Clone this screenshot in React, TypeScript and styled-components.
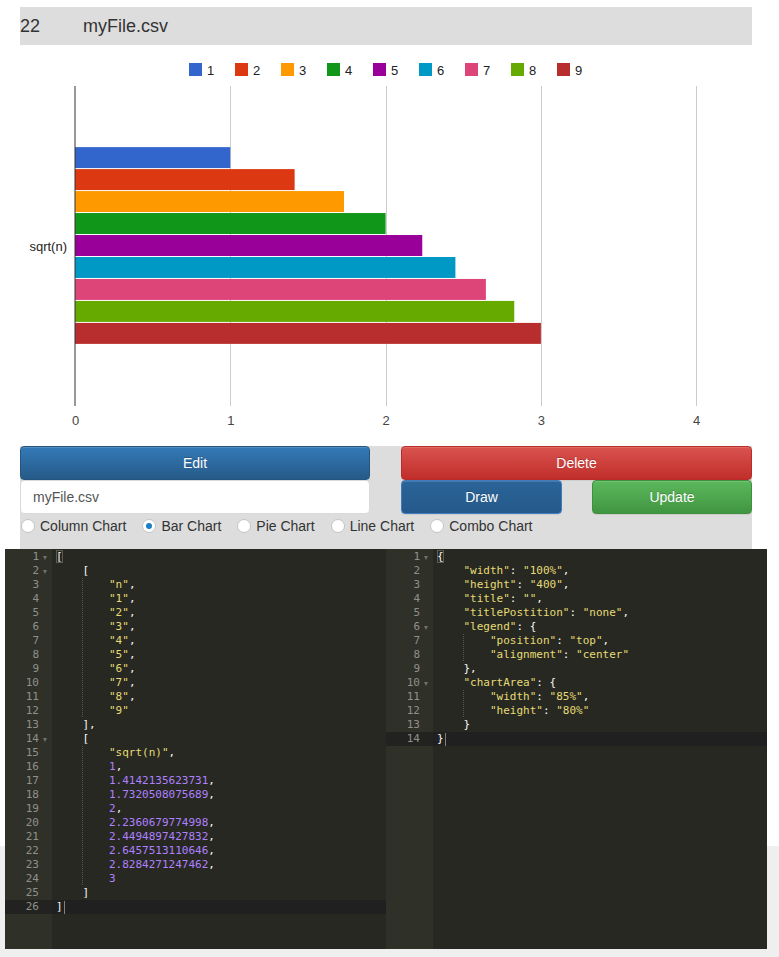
import React from "react";
import styled, { createGlobalStyle, css } from "styled-components";

const GlobalStyle = createGlobalStyle`
  html, body { margin: 0; padding: 0; }
  body { font-family: "Liberation Sans", Arial, Helvetica, sans-serif; color: #333; }
`;

const Page = styled.div`
  min-height: 957px;
  padding-top: 7px;
  box-sizing: border-box;
  background: linear-gradient(to bottom, #ffffff 0, #ffffff 846px, #efefef 846px);
`;

const Container = styled.div`
  width: 732px;
  margin-left: 20px;
`;

const TitleBar = styled.div`
  height: 38px;
  background: #dddddd;
  display: flex;
  align-items: center;
  font-size: 18px;
  color: #333;
`;

const TitleId = styled.span`
  width: 63px;
`;

const TitleName = styled.span``;

const ChartSvg = styled.svg`
  display: block;
  margin-top: 1px;
  font-family: "Liberation Sans", Arial, sans-serif;
`;

const Panel = styled.div`
  background: #dddddd;
`;

const Row = styled.div`
  display: flex;
  justify-content: space-between;
  align-items: stretch;
  height: 34px;
`;

type Variant = "primary" | "danger" | "success" | "focused";

const variants: Record<Variant, ReturnType<typeof css>> = {
  primary: css`
    background: linear-gradient(to bottom, #337ab7 0, #265a88 100%);
    border-color: #245580;
  `,
  danger: css`
    background: linear-gradient(to bottom, #d9534f 0, #c12e2a 100%);
    border-color: #b92c28;
  `,
  success: css`
    background: linear-gradient(to bottom, #5cb85c 0, #419641 100%);
    border-color: #3e8f3e;
  `,
  focused: css`
    background: linear-gradient(to bottom, #2b6499 0, #245a8a 100%);
    border-color: #3f7bbd;
  `,
};

const Button = styled.button<{ $variant: Variant; $width: number }>`
  width: ${(p) => p.$width}px;
  height: 34px;
  box-sizing: border-box;
  border: 1px solid transparent;
  border-radius: 4px;
  color: #fff;
  font-family: "Liberation Sans", Arial, sans-serif;
  font-size: 14px;
  text-shadow: 0 -1px 0 rgba(0, 0, 0, 0.2);
  box-shadow: inset 0 1px 0 rgba(255, 255, 255, 0.15), 0 1px 1px rgba(0, 0, 0, 0.075);
  padding: 0;
  cursor: pointer;
  ${(p) => variants[p.$variant]}
`;

const FileInput = styled.input`
  width: 350px;
  height: 34px;
  box-sizing: border-box;
  border: 1px solid #d9d9d9;
  border-radius: 4px;
  background: #fff;
  padding: 6px 12px;
  font-family: "Liberation Sans", Arial, sans-serif;
  font-size: 14px;
  color: #555;
  outline: none;
`;

const RightGroup = styled.div`
  width: 351px;
  display: flex;
  justify-content: space-between;
`;

const RadioRow = styled.div`
  display: flex;
  align-items: center;
  height: 35px;
  padding-bottom: 12px;
  box-sizing: border-box;
`;

const RadioItem = styled.label`
  display: flex;
  align-items: center;
  gap: 5px;
  margin-right: 15px;
  font-size: 14px;
  line-height: 20px;
  color: #333;
`;

const RadioCircle = styled.span<{ $checked?: boolean }>`
  width: 14px;
  height: 14px;
  margin-left: 1px;
  box-sizing: border-box;
  border-radius: 50%;
  border: 1px solid #c4c4c4;
  background: #fff;
  display: flex;
  align-items: center;
  justify-content: center;
  ${(p) =>
    p.$checked &&
    css`
      &::after {
        content: "";
        width: 6px;
        height: 6px;
        border-radius: 50%;
        background: #1b7fc4;
      }
    `}
`;

const EditorRow = styled.div`
  display: grid;
  grid-template-columns: 1fr 1fr;
  margin: 0 -15px;
  height: 400px;
`;

const Editor = styled.div`
  display: flex;
  height: 400px;
  overflow: hidden;
  font-family: "DejaVu Sans Mono", "Liberation Mono", monospace;
  font-size: 11px;
  line-height: 14px;
`;

const Gutter = styled.div`
  width: 47px;
  flex-shrink: 0;
  background: #2f3129;
  color: #8f908a;
  padding-top: 1px;
`;

const GutterCell = styled.div<{ $active?: boolean }>`
  height: 14px;
  display: flex;
  justify-content: flex-end;
  align-items: center;
  background: ${(p) => (p.$active ? "#222320" : "transparent")};
`;

const FoldSlot = styled.span`
  width: 13px;
  height: 14px;
  display: flex;
  align-items: center;
  padding-left: 4px;
  box-sizing: border-box;
`;

const FoldArrow = styled.span`
  width: 0;
  height: 0;
  border-left: 2.5px solid transparent;
  border-right: 2.5px solid transparent;
  border-top: 4px solid #6f706a;
  margin-top: 1px;
`;

const CodeArea = styled.div`
  flex: 1;
  background: #272822;
  padding-top: 1px;
`;

const CodeLine = styled.div<{ $active?: boolean }>`
  height: 14px;
  padding-left: 4px;
  white-space: pre;
  color: #f8f8f2;
  background: ${(p) => (p.$active ? "#202020" : "transparent")};
`;

const Indent = styled.span<{ $guide?: boolean }>`
  display: inline-block;
  height: 14px;
  vertical-align: top;
  ${(p) =>
    p.$guide &&
    css`
      background: repeating-linear-gradient(to bottom, #57574e 0, #57574e 1px, transparent 1px, transparent 2px)
        right top / 1px 100% no-repeat;
    `}
`;

const Str = styled.span`
  color: #e6db74;
`;

const Num = styled.span`
  color: #ae81ff;
`;

const Bracket = styled.span`
  box-shadow: inset 0 0 0 1px #5c5c52;
`;

const Cursor = styled.span`
  display: inline-block;
  width: 1px;
  height: 13px;
  margin-left: 1px;
  vertical-align: top;
  margin-top: 1px;
  background: rgba(248, 248, 240, 0.45);
`;

/* ---------- chart ---------- */

const values = [1, 2, 3, 4, 5, 6, 7, 8, 9].map((n) => Math.sqrt(n));
const colors = ["#3366cc", "#dc3912", "#ff9900", "#109618", "#990099", "#0099c6", "#dd4477", "#66aa00", "#b82e2e"];

const CH_LEFT = 55;
const CH_TOP = 40;
const CH_H = 320;
const UNIT = 155.3;

function BarChart() {
  const groupH = CH_H * 0.618;
  const groupTop = CH_TOP + (CH_H - groupH) / 2;
  const band = groupH / values.length;
  return (
    <ChartSvg width={732} height={400} viewBox="0 0 732 400">
      {values.map((_, i) => (
        <g key={`l${i}`}>
          <rect x={169 + i * 46} y={17} width={13} height={13} fill={colors[i]} />
          <text x={187 + i * 46} y={28.5} fontSize={13} fill="#222">
            {i + 1}
          </text>
        </g>
      ))}
      {[1, 2, 3, 4].map((v) => (
        <rect key={`g${v}`} x={Math.round(CH_LEFT + v * UNIT)} y={CH_TOP} width={1} height={CH_H} fill="#cccccc" />
      ))}
      {values.map((v, i) => (
        <rect
          key={`b${i}`}
          x={CH_LEFT}
          y={groupTop + i * band}
          width={v * UNIT}
          height={band - 1}
          fill={colors[i]}
        />
      ))}
      <rect x={CH_LEFT - 0.5} y={CH_TOP} width={1} height={CH_H} fill="#333333" />
      {[0, 1, 2, 3, 4].map((v) => (
        <text key={`t${v}`} x={CH_LEFT + v * UNIT + 0.5} y={378.5} fontSize={13} fill="#444" textAnchor="middle">
          {v}
        </text>
      ))}
      <text x={47} y={205} fontSize={13} fill="#222" textAnchor="end">
        sqrt(n)
      </text>
    </ChartSvg>
  );
}

/* ---------- code editor ---------- */

type Line = { text: string; fold?: boolean };

const dataLines: Line[] = [
  { text: "[", fold: true },
  { text: "    [", fold: true },
  { text: '        "n",' },
  { text: '        "1",' },
  { text: '        "2",' },
  { text: '        "3",' },
  { text: '        "4",' },
  { text: '        "5",' },
  { text: '        "6",' },
  { text: '        "7",' },
  { text: '        "8",' },
  { text: '        "9"' },
  { text: "    ]," },
  { text: "    [", fold: true },
  { text: '        "sqrt(n)",' },
  { text: "        1," },
  { text: "        1.4142135623731," },
  { text: "        1.7320508075689," },
  { text: "        2," },
  { text: "        2.2360679774998," },
  { text: "        2.4494897427832," },
  { text: "        2.6457513110646," },
  { text: "        2.8284271247462," },
  { text: "        3" },
  { text: "    ]" },
  { text: "]" },
];

const optionLines: Line[] = [
  { text: "{", fold: true },
  { text: '    "width": "100%",' },
  { text: '    "height": "400",' },
  { text: '    "title": "",' },
  { text: '    "titlePostition": "none",' },
  { text: '    "legend": {', fold: true },
  { text: '        "position": "top",' },
  { text: '        "alignment": "center"' },
  { text: "    }," },
  { text: '    "chartArea": {', fold: true },
  { text: '        "width": "85%",' },
  { text: '        "height": "80%"' },
  { text: "    }" },
  { text: "}" },
];

function tokenize(rest: string, key: string) {
  const out: React.ReactNode[] = [];
  const re = /"[^"]*"|-?\d+(?:\.\d+)?|[^"\d]+/g;
  let m: RegExpExecArray | null;
  let i = 0;
  while ((m = re.exec(rest))) {
    const t = m[0];
    if (t.startsWith('"')) out.push(<Str key={`${key}-${i}`}>{t}</Str>);
    else if (/^-?\d/.test(t)) out.push(<Num key={`${key}-${i}`}>{t}</Num>);
    else out.push(<React.Fragment key={`${key}-${i}`}>{t}</React.Fragment>);
    i++;
  }
  return out;
}

function CodeEditor({ lines }: { lines: Line[] }) {
  const last = lines.length - 1;
  return (
    <Editor>
      <Gutter>
        {lines.map((l, i) => (
          <GutterCell key={i} $active={i === last}>
            {i + 1}
            <FoldSlot>{l.fold && <FoldArrow />}</FoldSlot>
          </GutterCell>
        ))}
      </Gutter>
      <CodeArea>
        {lines.map((l, i) => {
          const lead = l.text.match(/^ */)![0].length;
          const levels = lead / 4;
          const rest = l.text.slice(lead);
          return (
            <CodeLine key={i} $active={i === last}>
              {Array.from({ length: levels }).map((_, k) => (
                <Indent key={k} $guide={k < levels - 1}>
                  {"    "}
                </Indent>
              ))}
              {i === 0 ? <Bracket>{rest}</Bracket> : tokenize(rest, `t${i}`)}
              {i === last && <Cursor />}
            </CodeLine>
          );
        })}
      </CodeArea>
    </Editor>
  );
}

const chartTypes = ["Column Chart", "Bar Chart", "Pie Chart", "Line Chart", "Combo Chart"];

export default function App() {
  return (
    <Page>
      <GlobalStyle />
      <Container>
        <TitleBar>
          <TitleId>22</TitleId>
          <TitleName>myFile.csv</TitleName>
        </TitleBar>
        <BarChart />
        <Panel>
          <Row>
            <Button $variant="primary" $width={350}>
              Edit
            </Button>
            <Button $variant="danger" $width={351}>
              Delete
            </Button>
          </Row>
          <Row>
            <FileInput defaultValue="myFile.csv" readOnly />
            <RightGroup>
              <Button $variant="focused" $width={161}>
                Draw
              </Button>
              <Button $variant="success" $width={160}>
                Update
              </Button>
            </RightGroup>
          </Row>
          <RadioRow>
            {chartTypes.map((t) => (
              <RadioItem key={t}>
                <RadioCircle $checked={t === "Bar Chart"} />
                {t}
              </RadioItem>
            ))}
          </RadioRow>
        </Panel>
        <EditorRow>
          <CodeEditor lines={dataLines} />
          <CodeEditor lines={optionLines} />
        </EditorRow>
      </Container>
    </Page>
  );
}
